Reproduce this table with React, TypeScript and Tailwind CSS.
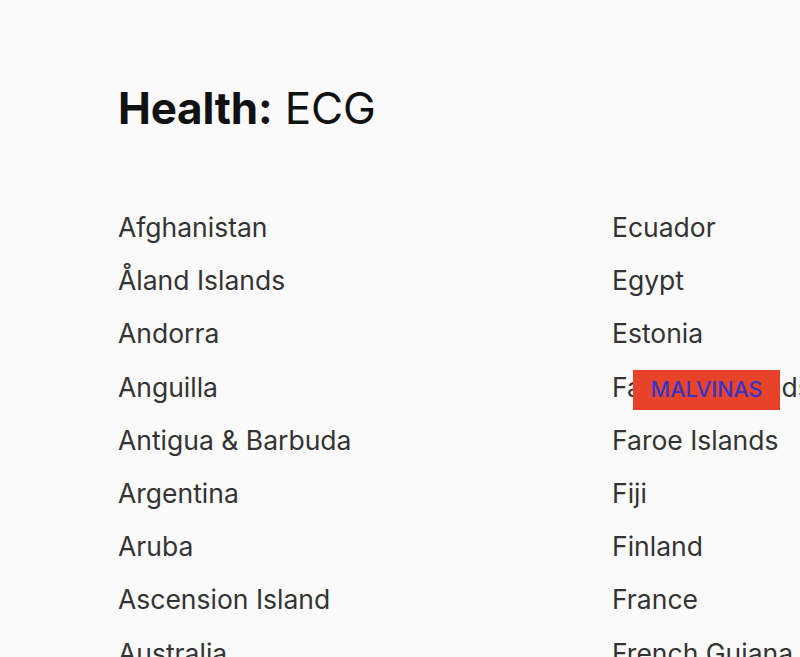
const colA = [
  "Afghanistan",
  "Åland Islands",
  "Andorra",
  "Anguilla",
  "Antigua & Barbuda",
  "Argentina",
  "Aruba",
  "Ascension Island",
  "Australia",
];

const colB = [
  "Ecuador",
  "Egypt",
  "Estonia",
  "Falkland Islands",
  "Faroe Islands",
  "Fiji",
  "Finland",
  "France",
  "French Guiana",
];

export default function App() {
  return (
    <div className="h-[657px] w-[800px] overflow-hidden bg-[#fafafa] font-['Inter',sans-serif]">
      <div className="pl-[118px] pt-[82px]">
        <h1 className="text-[44px] leading-[52px] text-[#111] tracking-[-0.2px]">
          <span className="font-bold">Health:</span> ECG
        </h1>
      </div>

      <div className="mt-[67px] grid grid-cols-[494px_1fr] pl-[118px]">
        <ul className="flex flex-col">
          {colA.map((c) => (
            <li key={c} className="h-[53.2px] whitespace-nowrap text-[26.5px] leading-[53px] text-[#333]">
              {c}
            </li>
          ))}
        </ul>
        <ul className="flex flex-col">
          {colB.map((c) => (
            <li key={c} className="relative h-[53.2px] whitespace-nowrap text-[26.5px] leading-[53px] text-[#333]">
              {c}
              {c === "Falkland Islands" && (
                <span className="absolute left-[21px] top-[9px] flex h-[40px] w-[147px] items-center justify-center bg-[#e8432a] text-[21.5px] font-medium text-[#3535c8]">
                  MALVINAS
                </span>
              )}
            </li>
          ))}
        </ul>
      </div>
    </div>
  );
}
